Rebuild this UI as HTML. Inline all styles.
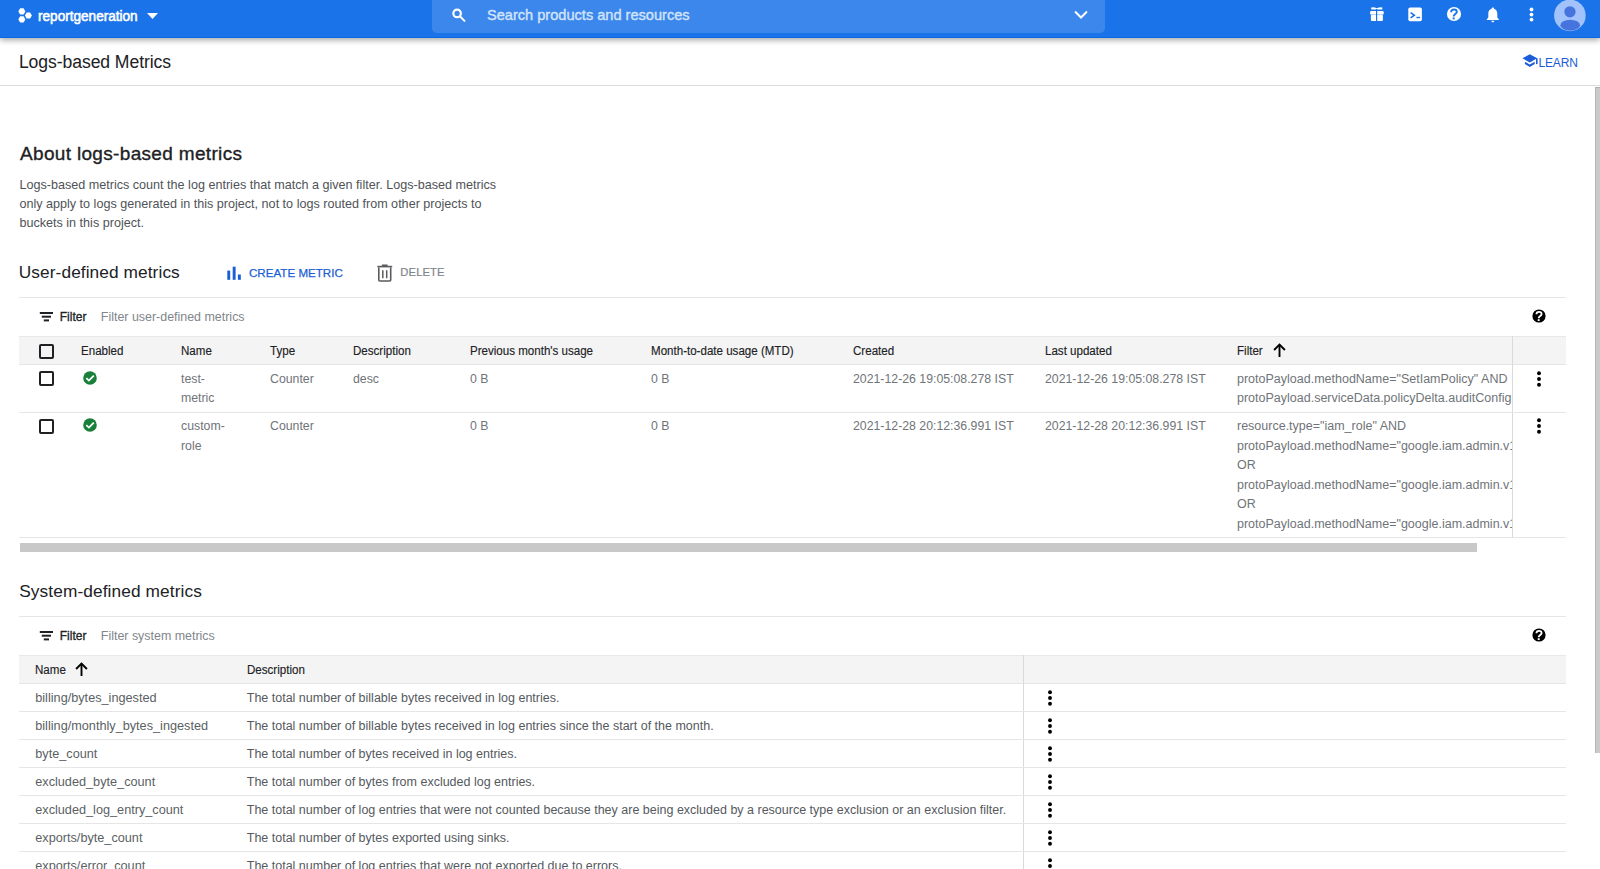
<!DOCTYPE html>
<html><head><meta charset="utf-8"><title>Logs-based Metrics</title>
<style>
html,body{margin:0;padding:0;width:1600px;height:869px;overflow:hidden;background:#fff;}
body{position:relative;font-family:"Liberation Sans", sans-serif;}
.t{position:absolute;white-space:pre;font-family:"Liberation Sans", sans-serif;}
.b{position:absolute;box-sizing:content-box;}
svg.b{overflow:visible;}
</style></head><body>
<div class=b style='left:0px;top:0px;width:1600px;height:37px;background:#1a73e8;border-bottom:1.5px solid #0a69e6;box-shadow:0 2px 6px rgba(0,0,0,.36)'></div>
<svg class=b style='left:14px;top:4px' width='24' height='24' viewBox='0 0 24 24'><polygon points='11.35,7.40 9.60,10.43 6.10,10.43 4.35,7.40 6.10,4.37 9.60,4.37' fill='#fff'/><polygon points='11.35,15.40 9.60,18.43 6.10,18.43 4.35,15.40 6.10,12.37 9.60,12.37' fill='#fff'/><polygon points='17.90,11.45 16.15,14.48 12.65,14.48 10.90,11.45 12.65,8.42 16.15,8.42' fill='#fff'/></svg>
<div class=t style='left:37.9px;top:7px;font-size:14px;line-height:18px;color:#fff;-webkit-text-stroke:0.55px #fff;transform:scaleX(0.97);transform-origin:0 0;'>reportgeneration</div>
<svg class=b style='left:146px;top:12px' width='13' height='8' viewBox='0 0 13 8'><path d='M1 1 L12 1 L6.5 7 Z' fill='#fff'/></svg>
<div class=b style='left:432px;top:0px;width:673px;height:33px;background:rgba(255,255,255,.15);border-radius:0 0 5px 5px'></div>
<svg class=b style='left:449px;top:7px' width='18' height='18' viewBox='0 0 18 18'><circle cx='8.1' cy='6.45' r='3.75' stroke='#fff' stroke-width='2.2' fill='none'/><path d='M10.9 9.3 L15.5 13.9' stroke='#fff' stroke-width='2' stroke-linecap='round'/></svg>
<div class=t style='left:487.4px;top:5px;font-size:15px;line-height:20px;color:#d2e3fc;-webkit-text-stroke:0.4px #d2e3fc;transform:scaleX(0.972);transform-origin:0 0;'>Search products and resources</div>
<svg class=b style='left:1072px;top:9px' width='18' height='12' viewBox='0 0 18 12'><path d='M3 2.5 L9 8.5 L15 2.5' stroke='#fff' stroke-width='2' fill='none'/></svg>
<svg class=b style='left:1365px;top:3px' width='24' height='24' viewBox='0 0 24 24'><g fill='#fff'><rect x='5.1' y='8.1' width='13.6' height='3.7' rx='1.2'/><rect x='5.9' y='11.8' width='12' height='6.3' rx='1'/><path d='M6.2 4.5 Q9 3.8 11.9 5.2 Q14.8 3.8 17.3 4.5 V6.6 H6.2Z'/></g><rect x='11' y='6' width='1.2' height='13' fill='#1a73e8'/><rect x='5' y='11.6' width='14' height='0.5' fill='#1a73e8' opacity='.35'/></svg>
<svg class=b style='left:1406px;top:5px' width='18' height='18' viewBox='0 0 18 18'><rect x='2.3' y='2.5' width='13.6' height='13.8' rx='1.8' fill='#fff'/><path d='M4.6 7.6 L8.3 10.2 L4.6 12.8' stroke='#1a73e8' stroke-width='1.6' fill='none'/><rect x='10.4' y='11.8' width='3.7' height='1.4' fill='#1a73e8'/></svg>
<svg class=b style='left:1443.75px;top:4.4px' width='20' height='20' viewBox='0 0 20 20'><g transform='translate(10 10)'><circle cx='0' cy='0' r='7.05' fill='#fff'/><path d='M-2.81 -1.84 C-2.81 -3.78 -1.30 -4.54 0 -4.54 C1.73 -4.54 2.81 -3.46 2.81 -2.16 C2.81 -0.65 1.30 -0.11 0.54 0.76 C0 1.30 -0.32 1.73 -0.32 2.48' stroke='#1a73e8' stroke-width='1.94' fill='none'/><rect x='-1.35' y='3.46' width='2.05' height='1.94' fill='#1a73e8'/></g></svg>
<svg class=b style='left:1484px;top:4px' width='18' height='20' viewBox='0 0 18 20'><path d='M8.8 3.6 C9.6 3.6 10 4.1 10 4.7 C12.2 5.4 13.3 7.3 13.3 9.6 V13.6 L14.8 15.2 V16 H2.8 V15.2 L4.3 13.6 V9.6 C4.3 7.3 5.4 5.4 7.6 4.7 C7.6 4.1 8 3.6 8.8 3.6Z' fill='#fff'/><path d='M7.3 16.8 H10.3 C10.3 17.7 9.6 18.3 8.8 18.3 C8 18.3 7.3 17.7 7.3 16.8Z' fill='#fff'/></svg>
<svg class=b style='left:1525px;top:5px' width='12' height='18' viewBox='0 0 12 18'><g fill='#fff'><circle cx='6.5' cy='4.5' r='1.9'/><circle cx='6.5' cy='9.6' r='1.9'/><circle cx='6.5' cy='14.6' r='1.9'/></g></svg>
<svg class=b style='left:1554px;top:0px' width='32' height='32' viewBox='0 0 32 32'><defs><clipPath id='av'><circle cx='15.9' cy='15.4' r='15.8'/></clipPath></defs><circle cx='15.9' cy='15.4' r='15.8' fill='#a1c2fa'/><g clip-path='url(#av)' fill='#4674de'><circle cx='15.95' cy='11.85' r='5.65'/><ellipse cx='16.2' cy='25.2' rx='9.8' ry='5.5'/></g></svg>
<div class=t style='left:18.9px;top:51px;font-size:17.6px;line-height:23px;color:#202124;letter-spacing:-0.08px;'>Logs-based Metrics</div>
<div class=b style='left:0px;top:85px;width:1600px;height:1px;background:#dcdcdc'></div>
<svg class=b style='left:1521px;top:52px' width='18' height='17' viewBox='0 0 18 17'><path d='M1.5 6.3 L8.8 2.2 L16.2 6.3 L8.8 10.4 Z' fill='#1b5dd6'/><path d='M3.9 9.7 V12 L8.8 15 L13.7 12 V9.7 L8.8 12.6 Z' fill='#1b5dd6'/><rect x='15' y='6.3' width='1.6' height='5.8' fill='#1b5dd6'/></svg>
<div class=t style='left:1538.6px;top:55px;font-size:12px;line-height:16px;color:#1b5dd6;letter-spacing:-0.2px;'>LEARN</div>
<div class=b style='left:1595px;top:87px;width:4px;height:665px;background:#cacaca;border-left:1px solid #b6b6b6;border-top:1px solid #b0b0b0'></div>
<div class=t style='left:20px;top:141px;font-size:19px;line-height:25px;color:#202124;-webkit-text-stroke:0.35px #202124;letter-spacing:0.33px;'>About logs-based metrics</div>
<div class=t style='left:19.4px;top:177px;font-size:12.6px;line-height:16px;color:#4f5357;'>Logs-based metrics count the log entries that match a given filter. Logs-based metrics</div>
<div class=t style='left:19.4px;top:196px;font-size:12.6px;line-height:16px;color:#4f5357;'>only apply to logs generated in this project, not to logs routed from other projects to</div>
<div class=t style='left:19.4px;top:215px;font-size:12.6px;line-height:16px;color:#4f5357;'>buckets in this project.</div>
<div class=t style='left:18.8px;top:261px;font-size:17.3px;line-height:22px;color:#202124;letter-spacing:0.08px;'>User-defined metrics</div>
<svg class=b style='left:225px;top:265px' width='18' height='16' viewBox='0 0 18 16'><g fill='#1b5dd6'><rect x='2.3' y='5.6' width='2.9' height='9.2'/><rect x='7.7' y='1.7' width='2.9' height='13.1'/><rect x='12.9' y='9.5' width='2.9' height='5.3'/></g></svg>
<div class=t style='left:249px;top:265px;font-size:11.6px;line-height:15px;color:#1b5dd6;-webkit-text-stroke:0.25px #1b5dd6;'>CREATE METRIC</div>
<svg class=b style='left:375px;top:263px' width='20' height='20' viewBox='0 0 20 20'><path d='M2.3 3.6 H17.2' stroke='#595b5e' stroke-width='1.6'/><path d='M7.6 3.2 V2.3 H11.9 V3.2' stroke='#595b5e' stroke-width='1.4' fill='none'/><path d='M3.8 4.4 V17 Q3.8 18 4.8 18 H14.7 Q15.7 18 15.7 17 V4.4' stroke='#595b5e' stroke-width='1.6' fill='none'/><path d='M7.8 7.3 V15.3 M11.7 7.3 V15.3' stroke='#595b5e' stroke-width='1.5'/></svg>
<div class=t style='left:400.3px;top:265px;font-size:11.2px;line-height:15px;color:#80868b;-webkit-text-stroke:0.2px #80868b;letter-spacing:0.15px;'>DELETE</div>
<div class=b style='left:19px;top:297px;width:1547px;height:1px;background:#e6e6e6'></div>
<svg class=b style='left:39px;top:311px' width='16' height='10' viewBox='0 0 16 10'><g fill='#202124'><rect x='0.8' y='1' width='13.2' height='2'/><rect x='2.8' y='4.7' width='9.2' height='2'/><rect x='4.8' y='8.4' width='5.2' height='2'/></g></svg>
<div class=t style='left:59.75px;top:309px;font-size:12px;line-height:16px;color:#202124;-webkit-text-stroke:0.3px #202124;'>Filter</div>
<div class=t style='left:100.8px;top:309px;font-size:12.45px;line-height:16px;color:#80868b;'>Filter user-defined metrics</div>
<svg class=b style='left:1529.2px;top:306.0px' width='20' height='20' viewBox='0 0 20 20'><g transform='translate(10 10)'><circle cx='0' cy='0' r='6.6' fill='#000'/><path d='M-2.60 -1.70 C-2.60 -3.50 -1.20 -4.20 0 -4.20 C1.60 -4.20 2.60 -3.20 2.60 -2.00 C2.60 -0.60 1.20 -0.10 0.50 0.70 C0 1.20 -0.30 1.60 -0.30 2.30' stroke='#fff' stroke-width='1.80' fill='none'/><rect x='-1.25' y='3.20' width='1.90' height='1.80' fill='#fff'/></g></svg>
<div class=b style='left:19px;top:336px;width:1547px;height:28px;background:#f4f4f4'></div>
<div class=b style='left:19px;top:336px;width:1547px;height:1px;background:#e8e8e8'></div>
<div class=b style='left:19px;top:364px;width:1547px;height:1px;background:#e6e6e6'></div>
<div class=b style='left:1512px;top:336px;width:1px;height:202px;background:#dadada'></div>
<div class=b style='left:39px;top:344px;width:11px;height:11px;border:2px solid #202124;border-radius:2px;'></div>
<div class=t style='left:81.2px;top:343px;font-size:12.3px;line-height:16px;color:#202124;-webkit-text-stroke:0.14px #202124;transform:scaleX(0.94);transform-origin:0 0;'>Enabled</div>
<div class=t style='left:181px;top:343px;font-size:12.3px;line-height:16px;color:#202124;-webkit-text-stroke:0.14px #202124;transform:scaleX(0.94);transform-origin:0 0;'>Name</div>
<div class=t style='left:270px;top:343px;font-size:12.3px;line-height:16px;color:#202124;-webkit-text-stroke:0.14px #202124;transform:scaleX(0.94);transform-origin:0 0;'>Type</div>
<div class=t style='left:353px;top:343px;font-size:12.3px;line-height:16px;color:#202124;-webkit-text-stroke:0.14px #202124;transform:scaleX(0.94);transform-origin:0 0;'>Description</div>
<div class=t style='left:470px;top:343px;font-size:12.3px;line-height:16px;color:#202124;-webkit-text-stroke:0.14px #202124;transform:scaleX(0.94);transform-origin:0 0;'>Previous month's usage</div>
<div class=t style='left:651px;top:343px;font-size:12.3px;line-height:16px;color:#202124;-webkit-text-stroke:0.14px #202124;transform:scaleX(0.94);transform-origin:0 0;'>Month-to-date usage (MTD)</div>
<div class=t style='left:853px;top:343px;font-size:12.3px;line-height:16px;color:#202124;-webkit-text-stroke:0.14px #202124;transform:scaleX(0.94);transform-origin:0 0;'>Created</div>
<div class=t style='left:1045px;top:343px;font-size:12.3px;line-height:16px;color:#202124;-webkit-text-stroke:0.14px #202124;transform:scaleX(0.94);transform-origin:0 0;'>Last updated</div>
<div class=t style='left:1237px;top:343px;font-size:12.3px;line-height:16px;color:#202124;-webkit-text-stroke:0.14px #202124;transform:scaleX(0.94);transform-origin:0 0;'>Filter</div>
<svg class=b style='left:1272.5px;top:343px' width='14' height='16' viewBox='0 0 14 16'><path d='M6.5 1.6 V14' stroke='#000' stroke-width='1.9'/><path d='M1.1 7 L6.5 1.6 L11.9 7' stroke='#000' stroke-width='1.9' fill='none'/></svg>
<div class=b style='left:39px;top:371px;width:11px;height:11px;border:2px solid #202124;border-radius:2px;'></div>
<svg class=b style='left:81.75px;top:370px' width='16' height='16' viewBox='0 0 16 16'><circle cx='8' cy='8' r='6.8' fill='#188038'/><path d='M4.3 8.1 L6.9 10.6 L11.8 5.7' stroke='#fff' stroke-width='1.8' fill='none'/></svg>
<div class=t style='left:181px;top:371px;font-size:12.3px;line-height:16px;color:#707479;'>test-</div>
<div class=t style='left:181px;top:390px;font-size:12.3px;line-height:16px;color:#707479;'>metric</div>
<div class=t style='left:270px;top:371px;font-size:12.3px;line-height:16px;color:#707479;'>Counter</div>
<div class=t style='left:353px;top:371px;font-size:12.3px;line-height:16px;color:#707479;'>desc</div>
<div class=t style='left:470px;top:371px;font-size:12.3px;line-height:16px;color:#707479;'>0 B</div>
<div class=t style='left:651px;top:371px;font-size:12.3px;line-height:16px;color:#707479;'>0 B</div>
<div class=t style='left:853px;top:371px;font-size:12.3px;line-height:16px;color:#707479;'>2021-12-26 19:05:08.278 IST</div>
<div class=t style='left:1045px;top:371px;font-size:12.3px;line-height:16px;color:#707479;'>2021-12-26 19:05:08.278 IST</div>
<div class=t style='left:1237px;top:371px;font-size:12.5px;line-height:16px;color:#707479;width:275px;overflow:hidden;'>protoPayload.methodName="SetIamPolicy" AND</div>
<div class=t style='left:1237px;top:390px;font-size:12.5px;line-height:16px;color:#707479;width:275px;overflow:hidden;'>protoPayload.serviceData.policyDelta.auditConfigDeltas:*</div>
<svg class=b style='left:1535.1px;top:369.8px' width='8' height='18' viewBox='0 0 8 18'><g fill='#000'><circle cx='4' cy='3.2' r='1.95'/><circle cx='4' cy='9' r='1.95'/><circle cx='4' cy='14.8' r='1.95'/></g></svg>
<div class=b style='left:19px;top:412px;width:1547px;height:1px;background:#e6e6e6'></div>
<div class=b style='left:39px;top:419px;width:11px;height:11px;border:2px solid #202124;border-radius:2px;'></div>
<svg class=b style='left:81.75px;top:417.3px' width='16' height='16' viewBox='0 0 16 16'><circle cx='8' cy='8' r='6.8' fill='#188038'/><path d='M4.3 8.1 L6.9 10.6 L11.8 5.7' stroke='#fff' stroke-width='1.8' fill='none'/></svg>
<div class=t style='left:181px;top:418px;font-size:12.3px;line-height:16px;color:#707479;'>custom-</div>
<div class=t style='left:181px;top:438px;font-size:12.3px;line-height:16px;color:#707479;'>role</div>
<div class=t style='left:270px;top:418px;font-size:12.3px;line-height:16px;color:#707479;'>Counter</div>
<div class=t style='left:470px;top:418px;font-size:12.3px;line-height:16px;color:#707479;'>0 B</div>
<div class=t style='left:651px;top:418px;font-size:12.3px;line-height:16px;color:#707479;'>0 B</div>
<div class=t style='left:853px;top:418px;font-size:12.3px;line-height:16px;color:#707479;'>2021-12-28 20:12:36.991 IST</div>
<div class=t style='left:1045px;top:418px;font-size:12.3px;line-height:16px;color:#707479;'>2021-12-28 20:12:36.991 IST</div>
<div class=t style='left:1237px;top:418px;font-size:12.5px;line-height:16px;color:#707479;width:275px;overflow:hidden;'>resource.type="iam_role" AND</div>
<div class=t style='left:1237px;top:438px;font-size:12.5px;line-height:16px;color:#707479;width:275px;overflow:hidden;'>protoPayload.methodName="google.iam.admin.v1.CreateRole"</div>
<div class=t style='left:1237px;top:457px;font-size:12.5px;line-height:16px;color:#707479;width:275px;overflow:hidden;'>OR</div>
<div class=t style='left:1237px;top:477px;font-size:12.5px;line-height:16px;color:#707479;width:275px;overflow:hidden;'>protoPayload.methodName="google.iam.admin.v1.DeleteRole"</div>
<div class=t style='left:1237px;top:496px;font-size:12.5px;line-height:16px;color:#707479;width:275px;overflow:hidden;'>OR</div>
<div class=t style='left:1237px;top:516px;font-size:12.5px;line-height:16px;color:#707479;width:275px;overflow:hidden;'>protoPayload.methodName="google.iam.admin.v1.UpdateRole"</div>
<svg class=b style='left:1535.1px;top:417.4px' width='8' height='18' viewBox='0 0 8 18'><g fill='#000'><circle cx='4' cy='3.2' r='1.95'/><circle cx='4' cy='9' r='1.95'/><circle cx='4' cy='14.8' r='1.95'/></g></svg>
<div class=b style='left:19px;top:537px;width:1547px;height:1px;background:#e6e6e6'></div>
<div class=b style='left:20px;top:543px;width:1457px;height:9px;background:#c8c8c8'></div>
<div class=t style='left:19.2px;top:580px;font-size:17.3px;line-height:22px;color:#202124;letter-spacing:0.1px;'>System-defined metrics</div>
<div class=b style='left:19px;top:616px;width:1547px;height:1px;background:#e6e6e6'></div>
<svg class=b style='left:39px;top:630px' width='16' height='10' viewBox='0 0 16 10'><g fill='#202124'><rect x='0.8' y='1' width='13.2' height='2'/><rect x='2.8' y='4.7' width='9.2' height='2'/><rect x='4.8' y='8.4' width='5.2' height='2'/></g></svg>
<div class=t style='left:59.75px;top:628px;font-size:12px;line-height:16px;color:#202124;-webkit-text-stroke:0.3px #202124;'>Filter</div>
<div class=t style='left:100.8px;top:628px;font-size:12.45px;line-height:16px;color:#80868b;'>Filter system metrics</div>
<svg class=b style='left:1529.2px;top:625.0px' width='20' height='20' viewBox='0 0 20 20'><g transform='translate(10 10)'><circle cx='0' cy='0' r='6.6' fill='#000'/><path d='M-2.60 -1.70 C-2.60 -3.50 -1.20 -4.20 0 -4.20 C1.60 -4.20 2.60 -3.20 2.60 -2.00 C2.60 -0.60 1.20 -0.10 0.50 0.70 C0 1.20 -0.30 1.60 -0.30 2.30' stroke='#fff' stroke-width='1.80' fill='none'/><rect x='-1.25' y='3.20' width='1.90' height='1.80' fill='#fff'/></g></svg>
<div class=b style='left:19px;top:655px;width:1547px;height:28px;background:#f4f4f4'></div>
<div class=b style='left:19px;top:655px;width:1547px;height:1px;background:#e8e8e8'></div>
<div class=b style='left:19px;top:683px;width:1547px;height:1px;background:#e6e6e6'></div>
<div class=b style='left:1023px;top:655px;width:1px;height:220px;background:#dadada'></div>
<div class=t style='left:35.25px;top:662px;font-size:12.3px;line-height:16px;color:#202124;-webkit-text-stroke:0.14px #202124;transform:scaleX(0.94);transform-origin:0 0;'>Name</div>
<svg class=b style='left:74.5px;top:662px' width='14' height='16' viewBox='0 0 14 16'><path d='M6.5 1.6 V14' stroke='#000' stroke-width='1.9'/><path d='M1.1 7 L6.5 1.6 L11.9 7' stroke='#000' stroke-width='1.9' fill='none'/></svg>
<div class=t style='left:246.75px;top:662px;font-size:12.3px;line-height:16px;color:#202124;-webkit-text-stroke:0.14px #202124;transform:scaleX(0.94);transform-origin:0 0;'>Description</div>
<div class=t style='left:35.25px;top:690px;font-size:12.7px;line-height:17px;color:#5b5f64;'>billing/bytes_ingested</div>
<div class=t style='left:246.75px;top:690px;font-size:12.5px;line-height:16px;color:#55595e;'>The total number of billable bytes received in log entries.</div>
<svg class=b style='left:1045.9px;top:688.9px' width='8' height='18' viewBox='0 0 8 18'><g fill='#000'><circle cx='4' cy='3.2' r='1.95'/><circle cx='4' cy='9' r='1.95'/><circle cx='4' cy='14.8' r='1.95'/></g></svg>
<div class=b style='left:19px;top:711px;width:1547px;height:1px;background:#e6e6e6'></div>
<div class=t style='left:35.25px;top:718px;font-size:12.7px;line-height:17px;color:#5b5f64;'>billing/monthly_bytes_ingested</div>
<div class=t style='left:246.75px;top:718px;font-size:12.5px;line-height:16px;color:#55595e;'>The total number of billable bytes received in log entries since the start of the month.</div>
<svg class=b style='left:1045.9px;top:716.9px' width='8' height='18' viewBox='0 0 8 18'><g fill='#000'><circle cx='4' cy='3.2' r='1.95'/><circle cx='4' cy='9' r='1.95'/><circle cx='4' cy='14.8' r='1.95'/></g></svg>
<div class=b style='left:19px;top:739px;width:1547px;height:1px;background:#e6e6e6'></div>
<div class=t style='left:35.25px;top:746px;font-size:12.7px;line-height:17px;color:#5b5f64;'>byte_count</div>
<div class=t style='left:246.75px;top:746px;font-size:12.5px;line-height:16px;color:#55595e;'>The total number of bytes received in log entries.</div>
<svg class=b style='left:1045.9px;top:744.9px' width='8' height='18' viewBox='0 0 8 18'><g fill='#000'><circle cx='4' cy='3.2' r='1.95'/><circle cx='4' cy='9' r='1.95'/><circle cx='4' cy='14.8' r='1.95'/></g></svg>
<div class=b style='left:19px;top:767px;width:1547px;height:1px;background:#e6e6e6'></div>
<div class=t style='left:35.25px;top:774px;font-size:12.7px;line-height:17px;color:#5b5f64;'>excluded_byte_count</div>
<div class=t style='left:246.75px;top:774px;font-size:12.5px;line-height:16px;color:#55595e;'>The total number of bytes from excluded log entries.</div>
<svg class=b style='left:1045.9px;top:772.9px' width='8' height='18' viewBox='0 0 8 18'><g fill='#000'><circle cx='4' cy='3.2' r='1.95'/><circle cx='4' cy='9' r='1.95'/><circle cx='4' cy='14.8' r='1.95'/></g></svg>
<div class=b style='left:19px;top:795px;width:1547px;height:1px;background:#e6e6e6'></div>
<div class=t style='left:35.25px;top:802px;font-size:12.7px;line-height:17px;color:#5b5f64;'>excluded_log_entry_count</div>
<div class=t style='left:246.75px;top:802px;font-size:12.5px;line-height:16px;color:#55595e;'>The total number of log entries that were not counted because they are being excluded by a resource type exclusion or an exclusion filter.</div>
<svg class=b style='left:1045.9px;top:800.9px' width='8' height='18' viewBox='0 0 8 18'><g fill='#000'><circle cx='4' cy='3.2' r='1.95'/><circle cx='4' cy='9' r='1.95'/><circle cx='4' cy='14.8' r='1.95'/></g></svg>
<div class=b style='left:19px;top:823px;width:1547px;height:1px;background:#e6e6e6'></div>
<div class=t style='left:35.25px;top:830px;font-size:12.7px;line-height:17px;color:#5b5f64;'>exports/byte_count</div>
<div class=t style='left:246.75px;top:830px;font-size:12.5px;line-height:16px;color:#55595e;'>The total number of bytes exported using sinks.</div>
<svg class=b style='left:1045.9px;top:828.9px' width='8' height='18' viewBox='0 0 8 18'><g fill='#000'><circle cx='4' cy='3.2' r='1.95'/><circle cx='4' cy='9' r='1.95'/><circle cx='4' cy='14.8' r='1.95'/></g></svg>
<div class=b style='left:19px;top:851px;width:1547px;height:1px;background:#e6e6e6'></div>
<div class=t style='left:35.25px;top:858px;font-size:12.7px;line-height:17px;color:#5b5f64;'>exports/error_count</div>
<div class=t style='left:246.75px;top:858px;font-size:12.5px;line-height:16px;color:#55595e;'>The total number of log entries that were not exported due to errors.</div>
<svg class=b style='left:1045.9px;top:856.9px' width='8' height='18' viewBox='0 0 8 18'><g fill='#000'><circle cx='4' cy='3.2' r='1.95'/><circle cx='4' cy='9' r='1.95'/><circle cx='4' cy='14.8' r='1.95'/></g></svg>
<div class=b style='left:19px;top:879px;width:1547px;height:1px;background:#e6e6e6'></div>
</body></html>
